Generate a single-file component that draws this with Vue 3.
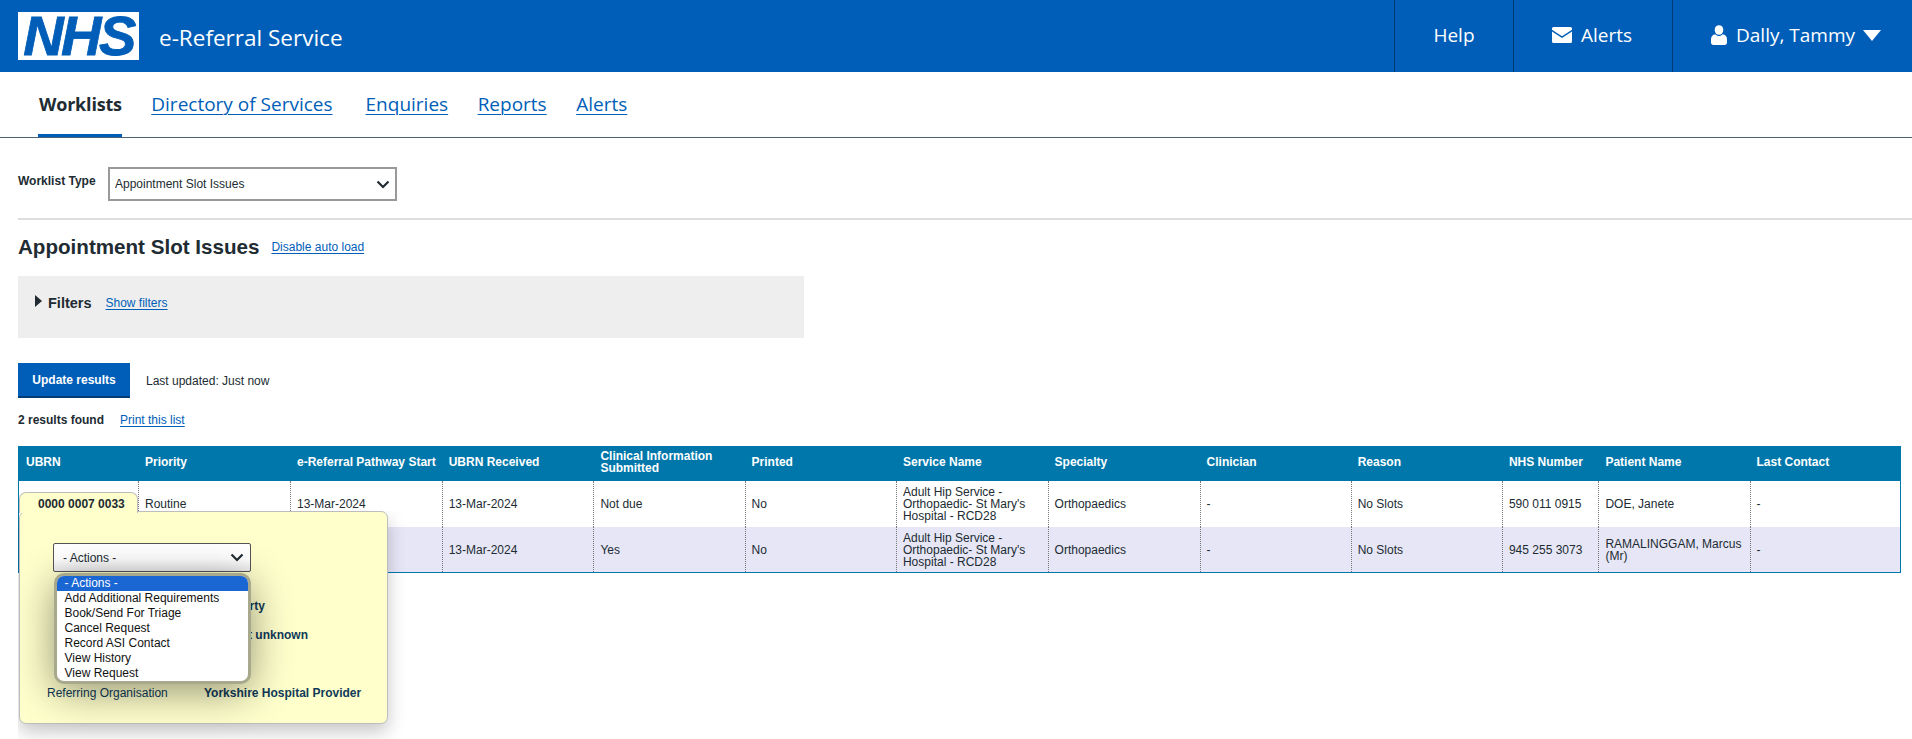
<script setup>
const navLinks = ['Directory of Services', 'Enquiries', 'Reports', 'Alerts']
const columns = ['UBRN', 'Priority', 'e-Referral Pathway Start', 'UBRN Received', 'Clinical Information Submitted', 'Printed', 'Service Name', 'Specialty', 'Clinician', 'Reason', 'NHS Number', 'Patient Name', 'Last Contact']
const widths = [119, 152, 151.7, 151.7, 151.2, 151.4, 151.6, 152, 151.1, 151.3, 96.5, 151.1, 150.4]
const service = "Adult Hip Service - Orthopaedic- St Mary's Hospital - RCD28"
const rows = [
  ['', 'Routine', '13-Mar-2024', '13-Mar-2024', 'Not due', 'No', service, 'Orthopaedics', '-', 'No Slots', '590 011 0915', 'DOE, Janete', '-'],
  ['', '', '', '13-Mar-2024', 'Yes', 'No', service, 'Orthopaedics', '-', 'No Slots', '945 255 3073', 'RAMALINGGAM, Marcus (Mr)', '-']
]
const actions = ['- Actions -', 'Add Additional Requirements', 'Book/Send For Triage', 'Cancel Request', 'Record ASI Contact', 'View History', 'View Request']
const details = [
  ['', 'A Property'],
  ['', 'Consent unknown'],
  ['', ''],
  ['Referring Organisation', 'Yorkshire Hospital Provider']
]
</script>

<template>
  <div class="page">
    <header class="topbar">
      <div class="logo">NHS</div>
      <div class="service">e-Referral Service</div>
      <div class="top-item help">Help</div>
      <div class="top-item alerts">
        <svg class="mail" viewBox="0 0 20 16"><path d="M1.5 0h17A1.5 1.5 0 0 1 20 1.500v1.200L10 9.200 0 2.700V1.500A1.500 1.500 0 0 1 1.500 0z"/><path d="M0 4.600l10 6.400 10-6.400v9.900a1.500 1.500 0 0 1-1.500 1.500h-17A1.500 1.500 0 0 1 0 14.500z"/></svg>
        <span>Alerts</span>
      </div>
      <div class="top-item user">
        <svg class="person" viewBox="0 0 16 20"><ellipse cx="8" cy="5" rx="4.300" ry="4.800"/><path d="M0 17.500v-3.300c0-3 2-4.700 4.300-5 1 1.200 2.300 1.800 3.700 1.800s2.700-.6 3.700-1.800c2.300.3 4.300 2 4.300 5v3.300c0 1.500-1 2.500-2.500 2.500h-11C1 20 0 19 0 17.500z"/></svg>
        <span>Dally, Tammy</span>
        <svg class="caret" viewBox="0 0 18 11"><path d="M0 0h18L9 11z"/></svg>
      </div>
    </header>

    <nav class="tabs">
      <a class="tab active">Worklists</a>
      <a v-for="l in navLinks" :key="l" class="tab">{{ l }}</a>
    </nav>

    <main class="content">
      <div class="type-row">
        <label class="type-label">Worklist Type</label>
        <div class="type-select">
          <span>Appointment Slot Issues</span>
          <svg class="chev" viewBox="0 0 14 9"><path d="M1.500 1.500L7 7l5.500-5.500"/></svg>
        </div>
      </div>
      <div class="rule"></div>
      <div class="title-row">
        <h1>Appointment Slot Issues</h1>
        <a class="link">Disable auto load</a>
      </div>
      <section class="filters">
        <svg class="tri" viewBox="0 0 7 12"><path d="M0 0l7 6-7 6z"/></svg>
        <strong>Filters</strong>
        <a class="link">Show filters</a>
      </section>
      <div class="update-row">
        <button class="update">Update results</button>
        <span>Last updated: Just now</span>
      </div>
      <div class="found-row">
        <strong>2 results found</strong>
        <a class="link">Print this list</a>
      </div>

      <div class="table-wrap">
        <table>
          <colgroup>
            <col v-for="(w, i) in widths" :key="i" :style="{ width: w + 'px' }" />
          </colgroup>
          <thead>
            <tr><th v-for="c in columns" :key="c">{{ c }}</th></tr>
          </thead>
          <tbody>
            <tr v-for="(r, i) in rows" :key="i">
              <td v-for="(v, j) in r" :key="j">{{ v }}</td>
            </tr>
          </tbody>
        </table>

        <div class="pop">
          <div class="actions-select">
            <span>- Actions -</span>
            <svg class="chev" viewBox="0 0 14 9"><path d="M1.500 1.500L7 7l5.500-5.500"/></svg>
          </div>
          <div class="details">
            <template v-for="(d, i) in details" :key="i">
              <span>{{ d[0] }}</span><strong>{{ d[1] }}</strong>
            </template>
          </div>
          <ul class="listbox">
            <li v-for="(a, i) in actions" :key="a" :class="{ sel: i === 0 }">{{ a }}</li>
          </ul>
        </div>
        <div class="pop-tab">0000 0007 0033</div>
      </div>
    </main>
  </div>
</template>

<style>
html, body { margin: 0; background: #fff; }
</style>

<style scoped>
.page {
  height: 739px;
  overflow: hidden;
  font-family: "Liberation Sans", Arial, sans-serif;
  font-size: 12px;
  color: #212b32;
}
.topbar {
  height: 72px;
  background: #005eb8;
  display: flex;
  align-items: stretch;
  color: #fff;
  font-family: "Open Sans", sans-serif;
  font-size: 19px;
}
.logo {
  margin: 12px 0 0 18px;
  width: 121px;
  height: 48px;
  background: #fff;
  color: #005eb8;
  font: italic 700 56px/48px "Liberation Sans", Arial, sans-serif;
  letter-spacing: -2.500px;
  text-align: center;
  -webkit-text-stroke: 0.800px #005eb8;
}
.service {
  margin-left: 20px;
  line-height: 76px;
  font-size: 22.500px;
  flex: 1;
}
.top-item {
  display: flex;
  align-items: center;
  justify-content: center;
  border-left: 1px solid #003a75;
  font-size: 19px;
  padding-bottom: 2px;
  box-sizing: border-box;
}
.help { width: 119px; }
.alerts { width: 159px; gap: 9px; padding-right: 2px; }
.user { width: 240px; gap: 9px; padding-left: 38px; justify-content: flex-start; }
.mail { width: 20px; height: 16px; fill: #fff; }
.person { width: 16px; height: 20px; fill: #fff; }
.caret { width: 18px; height: 11px; fill: #fff; margin-left: -1px; }

.tabs {
  height: 65px;
  border-bottom: 1px solid #4c6272;
  display: flex;
  padding-left: 38px;
  font-family: "Open Sans", sans-serif;
  font-size: 19px;
}
.tab {
  color: #005eb8;
  text-decoration: underline;
  text-underline-offset: 3px;
  text-decoration-thickness: 1px;
  line-height: 65px;
  margin-left: 29.500px;
  height: 65px;
  box-sizing: border-box;
}
.tab:nth-child(3) { margin-left: 33px; }
.tab.active {
  margin-left: 0;
  padding-left: 1px;
  color: #212b32;
  font-weight: 700;
  font-size: 18px;
  letter-spacing: -0.200px;
  text-decoration: none;
  border-bottom: 3px solid #005eb8;
}
.content { padding: 29px 11px 0 18px; }
.type-row { display: flex; align-items: center; height: 34px; }
.type-label { font-weight: 700; width: 90px; position: relative; bottom: 3px; }
.type-select {
  width: 289px;
  height: 34px;
  box-sizing: border-box;
  border: 2px solid #999;
  display: flex;
  align-items: center;
  justify-content: space-between;
  padding: 0 5px 0 5px;
}
.chev { width: 14px; height: 9px; fill: none; stroke: #212b32; stroke-width: 2.200px; }
.rule { height: 2px; background: #ddd; margin: 17px -11px 0 0; }
.title-row { display: flex; align-items: center; gap: 12px; height: 56px; padding-bottom: 2px; box-sizing: border-box; }
h1 { margin: 0; font-size: 20.600px; line-height: 24px; font-weight: 700; }
.link { color: #005eb8; text-decoration: underline; text-underline-offset: 2px; }
.filters {
  width: 786px;
  height: 62px;
  background: #eee;
  display: flex;
  align-items: center;
  padding: 0 0 9px 17px;
  box-sizing: border-box;
}
.tri { width: 7px; height: 12px; fill: #212b32; margin-top: -4px; }
.filters strong { font-size: 14.500px; margin-left: 6px; margin-right: 14px; }
.update-row { display: flex; align-items: center; gap: 16px; margin-top: 25px; }
.update {
  width: 112px;
  height: 35px;
  border: 0;
  border-bottom: 2px solid #003d78;
  background: #005eb8;
  color: #fff;
  font: 700 12px "Liberation Sans", Arial, sans-serif;
  padding: 0;
}
.found-row { display: flex; gap: 16px; margin-top: 15px; line-height: 14px; }
.table-wrap { position: relative; margin-top: 19px; width: 1883px; }
table {
  border-collapse: separate;
  border-spacing: 0;
  table-layout: fixed;
  width: 1883px;
  border: 1px solid #0077ab;
  border-top: 0;
  line-height: 12px;
}
th {
  height: 35px;
  background: #0077ab;
  color: #fff;
  font-weight: 700;
  text-align: left;
  padding: 0 0 3px 7px;
  box-sizing: border-box;
}
td {
  height: 46px;
  box-sizing: border-box;
  padding: 0 2px 0 6px;
  border-left: 1px dotted #777;
  vertical-align: middle;
}
td:first-child { border-left: 0; }
td:nth-child(7) { padding-right: 7px; }
tbody tr:nth-child(2) td { background: #e6e6f6; height: 45px; }

.pop {
  position: absolute;
  left: 1px;
  top: 65px;
  width: 369px;
  height: 213px;
  box-sizing: border-box;
  background: #ffffcc;
  border: 1px solid #bdbdbd;
  border-radius: 7px;
  box-shadow: 0 8px 18px rgba(0, 0, 0, 0.22);
  clip-path: inset(0 -40px -40px -1px);
  padding: 31px 0 0 27px;
  color: #0f3a58;
}
.pop-tab {
  position: absolute;
  left: 1px;
  top: 46px;
  width: 119px;
  height: 21px;
  box-sizing: border-box;
  background: #ffffcc;
  border: 1px solid #bdbdbd;
  border-bottom: 0;
  border-radius: 7px 7px 0 0;
  font-weight: 700;
  line-height: 22px;
  padding-left: 18px;
  color: #212b32;
}
.actions-select {
  margin-left: 6px;
  width: 198px;
  height: 29px;
  box-sizing: border-box;
  border: 1px solid #555;
  border-radius: 2px;
  background: linear-gradient(#fff 55%, #ececec);
  display: flex;
  align-items: center;
  justify-content: space-between;
  padding: 0 6px 0 9px;
  color: #212b32;
}
.details {
  display: grid;
  grid-template-columns: 157px auto;
  grid-auto-rows: 29px;
  align-items: center;
  margin-top: 19px;
}
.listbox {
  position: absolute;
  left: 34px;
  top: 60.500px;
  width: 196.500px;
  height: 111px;
  box-sizing: border-box;
  margin: 0;
  padding: 0;
  list-style: none;
  background: #fff;
  border: 3px solid #a8a88c;
  border-radius: 10px;
  overflow: hidden;
  box-shadow: 0 8px 40px rgba(0, 0, 0, 0.42);
  color: #111;
  line-height: 15px;
}
.listbox li { height: 15px; padding-left: 7.500px; white-space: nowrap; }
.listbox li.sel { background: #1a66d2; color: #fff; }
</style>
